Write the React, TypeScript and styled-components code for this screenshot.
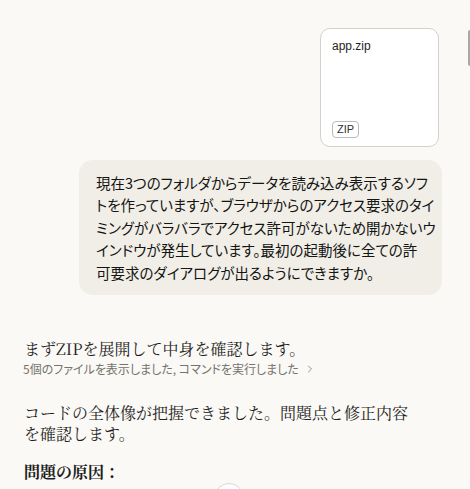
import styled, { createGlobalStyle } from "styled-components";
import { ChevronRight } from "lucide-react";

const GlobalStyle = createGlobalStyle`
  html, body {
    margin: 0;
    padding: 0;
    background: #faf9f5;
  }
  body {
    font-family: "Noto Sans CJK JP", "Noto Sans", sans-serif;
    color: #141413;
    overflow: hidden;
  }
`;

const Page = styled.div`
  position: relative;
  height: 489px;
  overflow: hidden;
  padding-top: 28px;
  box-sizing: border-box;
`;

const UserTurn = styled.div`
  display: flex;
  flex-direction: column;
  align-items: flex-end;
  gap: 13px;
  padding-right: 28px;
`;

const FileCard = styled.div`
  width: 119px;
  height: 119px;
  box-sizing: border-box;
  margin-right: 3px;
  padding: 10px 10px 8px 11px;
  background: #ffffff;
  border: 1px solid #d3d1cb;
  border-radius: 10px;
  display: flex;
  flex-direction: column;
  justify-content: space-between;
  align-items: flex-start;
`;

const FileName = styled.div`
  font-family: "Liberation Sans", Arial, sans-serif;
  font-size: 12px;
  line-height: 15px;
  color: #1f1e1d;
`;

const Badge = styled.span`
  font-family: "Liberation Sans", Arial, sans-serif;
  font-size: 11px;
  line-height: 15px;
  color: #333333;
  padding: 0 4px;
  border: 1px solid #bdbbb6;
  border-radius: 4px;
  background: #ffffff;
`;

const Bubble = styled.div`
  width: 363px;
  box-sizing: border-box;
  padding: 12px 10px 11px 17px;
  background: #f0eee6;
  border-radius: 14px;
  font-size: 14.5px;
  line-height: 22.4px;
  font-feature-settings: "palt";
  color: #141413;
`;

const BubbleLine = styled.span`
  display: block;
  white-space: nowrap;
`;

const AssistantTurn = styled.div`
  padding: 43px 54px 0 24px;
  font-family: "Noto Serif CJK JP", "Liberation Serif", serif;
  color: #1f1e1d;
`;

const Para = styled.p<{ $top?: number }>`
  margin: ${(p) => p.$top ?? 0}px 0 0;
  font-size: 16px;
  line-height: 21.5px;
`;

const ToolLine = styled.div`
  display: flex;
  align-items: center;
  gap: 5px;
  margin-left: -1px;
  font-family: "Noto Sans CJK JP", "Noto Sans", sans-serif;
  font-feature-settings: "palt";
  font-size: 12px;
  line-height: 18px;
  color: #75736d;
`;

const Heading = styled.h3`
  margin: 16px 0 0;
  font-size: 16px;
  line-height: 21.5px;
  font-weight: 700;
`;

const ScrollButton = styled.button`
  position: absolute;
  left: 214px;
  top: 483px;
  width: 30px;
  height: 30px;
  border-radius: 50%;
  border: 1px solid #d8d6d0;
  background: #ffffff;
  padding: 0;
`;

const ScrollThumb = styled.div`
  position: absolute;
  right: 0;
  top: 30px;
  width: 2px;
  height: 36px;
  border-radius: 2px 0 0 2px;
  background: #a9a8a4;
`;

const userLines = [
  "現在3つのフォルダからデータを読み込み表示するソフ",
  "トを作っていますが、ブラウザからのアクセス要求のタイ",
  "ミングがバラバラでアクセス許可がないため開かないウ",
  "インドウが発生しています。最初の起動後に全ての許",
  "可要求のダイアログが出るようにできますか。",
];

export default function App() {
  return (
    <>
      <GlobalStyle />
      <Page>
        <UserTurn>
          <FileCard>
            <FileName>app.zip</FileName>
            <Badge>ZIP</Badge>
          </FileCard>
          <Bubble>
            {userLines.map((line) => (
              <BubbleLine key={line}>{line}</BubbleLine>
            ))}
          </Bubble>
        </UserTurn>
        <AssistantTurn>
          <Para>まずZIPを展開して中身を確認します。</Para>
          <ToolLine>
            5個のファイルを表示しました, コマンドを実行しました
            <ChevronRight size={12} strokeWidth={1.5} />
          </ToolLine>
          <Para $top={24}>
            コードの全体像が把握できました。問題点と修正内容を確認します。
          </Para>
          <Heading>問題の原因：</Heading>
        </AssistantTurn>
        <ScrollButton aria-label="scroll down" />
        <ScrollThumb />
      </Page>
    </>
  );
}
